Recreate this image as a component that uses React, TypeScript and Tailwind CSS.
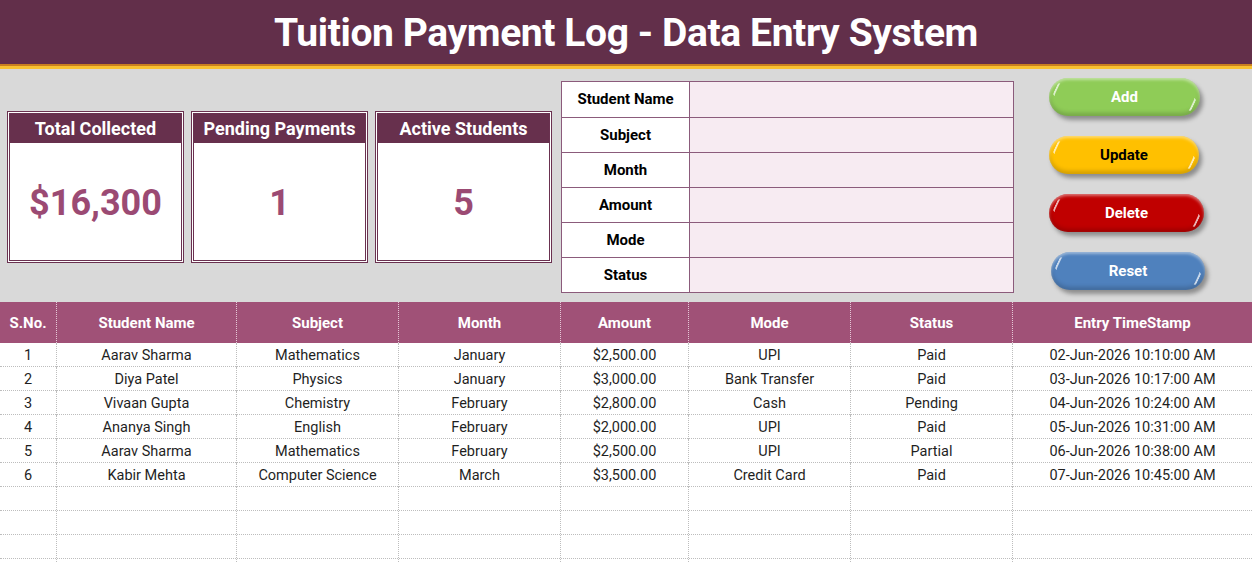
import React from 'react';

const cols = 'grid grid-cols-[57px_180px_162px_162px_128px_162px_162px_239px]';

const headers = ['S.No.', 'Student Name', 'Subject', 'Month', 'Amount', 'Mode', 'Status', 'Entry TimeStamp'];

const rows: string[][] = [
  ['1', 'Aarav Sharma', 'Mathematics', 'January', '$2,500.00', 'UPI', 'Paid', '02-Jun-2026 10:10:00 AM'],
  ['2', 'Diya Patel', 'Physics', 'January', '$3,000.00', 'Bank Transfer', 'Paid', '03-Jun-2026 10:17:00 AM'],
  ['3', 'Vivaan Gupta', 'Chemistry', 'February', '$2,800.00', 'Cash', 'Pending', '04-Jun-2026 10:24:00 AM'],
  ['4', 'Ananya Singh', 'English', 'February', '$2,000.00', 'UPI', 'Paid', '05-Jun-2026 10:31:00 AM'],
  ['5', 'Aarav Sharma', 'Mathematics', 'February', '$2,500.00', 'UPI', 'Partial', '06-Jun-2026 10:38:00 AM'],
  ['6', 'Kabir Mehta', 'Computer Science', 'March', '$3,500.00', 'Credit Card', 'Paid', '07-Jun-2026 10:45:00 AM'],
  ['', '', '', '', '', '', '', ''],
  ['', '', '', '', '', '', '', ''],
  ['', '', '', '', '', '', '', ''],
  ['', '', '', '', '', '', '', ''],
];

const kpis = [
  { title: 'Total Collected', value: '$16,300' },
  { title: 'Pending Payments', value: '1' },
  { title: 'Active Students', value: '5' },
];

const fields = ['Student Name', 'Subject', 'Month', 'Amount', 'Mode', 'Status'];

const buttons = [
  { label: 'Add', cls: 'bg-[#8fcc57] text-white w-[151px] ml-0' },
  { label: 'Update', cls: 'bg-[#ffc000] text-black w-[150px] ml-0' },
  { label: 'Delete', cls: 'bg-[#c00000] text-white w-[155px] ml-0' },
  { label: 'Reset', cls: 'bg-[#4f81bd] text-white w-[154px] ml-[2px]' },
];

function KpiCard({ title, value }: { title: string; value: string }) {
  return (
    <div className="w-[177px] h-[152px] bg-white border-[3px] border-double border-[#6a3150] flex flex-col">
      <div className="h-[29px] bg-[#67304d] text-white font-bold text-[18px] flex items-center justify-center leading-none">
        {title}
      </div>
      <div className="flex-1 flex items-center justify-center text-[#9b4a73] font-bold text-[36px] leading-none pt-[2px]">
        {value}
      </div>
    </div>
  );
}

function GlossyButton({ label, cls }: { label: string; cls: string }) {
  return (
    <button
      type="button"
      className={`relative h-[38px] rounded-full font-bold text-[15px] shadow-[3px_4px_4px_rgba(0,0,0,0.35),inset_0_2px_3px_rgba(255,255,255,0.45),inset_0_-3px_4px_rgba(0,0,0,0.18)] ${cls}`}
    >
      <span className="absolute left-[6px] top-[5px] w-[6px] h-[14px] rounded-full border-l-2 border-white/70 rotate-[25deg]" />
      <span className="absolute right-[6px] bottom-[5px] w-[6px] h-[14px] rounded-full border-r-2 border-white/70 rotate-[25deg]" />
      {label}
    </button>
  );
}

export default function App() {
  return (
    <div className="w-[1252px] h-[563px] overflow-hidden bg-white font-['Roboto',sans-serif]">
      <header className="h-[64px] bg-[#622f4a] flex items-center justify-center">
        <h1 className="text-white font-bold text-[39px] tracking-[-0.4px] leading-none pt-[2px]">
          Tuition Payment Log - Data Entry System
        </h1>
      </header>
      <div className="h-[2px] bg-[#c9801f]" />
      <div className="h-[3px] bg-[#f7c232]" />

      <section className="h-[233px] bg-[#d9d9d9] flex items-start pl-[7px]">
        <div className="flex gap-[7px] mt-[42px]">
          {kpis.map((k) => (
            <KpiCard key={k.title} {...k} />
          ))}
        </div>

        <div className="ml-[9px] mt-[12px] w-[453px] border border-[#8b5b7b]">
          {fields.map((f, i) => (
            <div
              key={f}
              className={`grid grid-cols-[128px_1fr] h-[35px] ${i > 0 ? 'border-t border-[#8b5b7b]' : ''}`}
            >
              <div className="bg-white border-r border-[#8b5b7b] flex items-center justify-center font-bold text-[15px] text-black">
                {f}
              </div>
              <div className="bg-[#f7ebf2]" />
            </div>
          ))}
        </div>

        <div className="ml-[35px] mt-[9px] flex flex-col gap-[20px]">
          {buttons.map((b) => (
            <GlossyButton key={b.label} {...b} />
          ))}
        </div>
      </section>

      <div className={`${cols} h-[41px] bg-[#a05177]`}>
        {headers.map((h, i) => (
          <div
            key={h}
            className={`flex items-center justify-center text-white font-bold text-[15px] pt-[1px] ${i < headers.length - 1 ? 'border-r border-dotted border-[#e6c9d8]' : ''}`}
          >
            {h}
          </div>
        ))}
      </div>

      {rows.map((r, ri) => (
        <div key={ri} className={`${cols} h-[24px] border-b border-dotted border-[#bdbdbd]`}>
          {r.map((c, ci) => (
            <div
              key={ci}
              className={`flex items-center justify-center text-[14.5px] text-[#1f1f1f] pt-[2px] ${ci < r.length - 1 ? 'border-r border-dotted border-[#bdbdbd]' : ''}`}
            >
              {c}
            </div>
          ))}
        </div>
      ))}
    </div>
  );
}
